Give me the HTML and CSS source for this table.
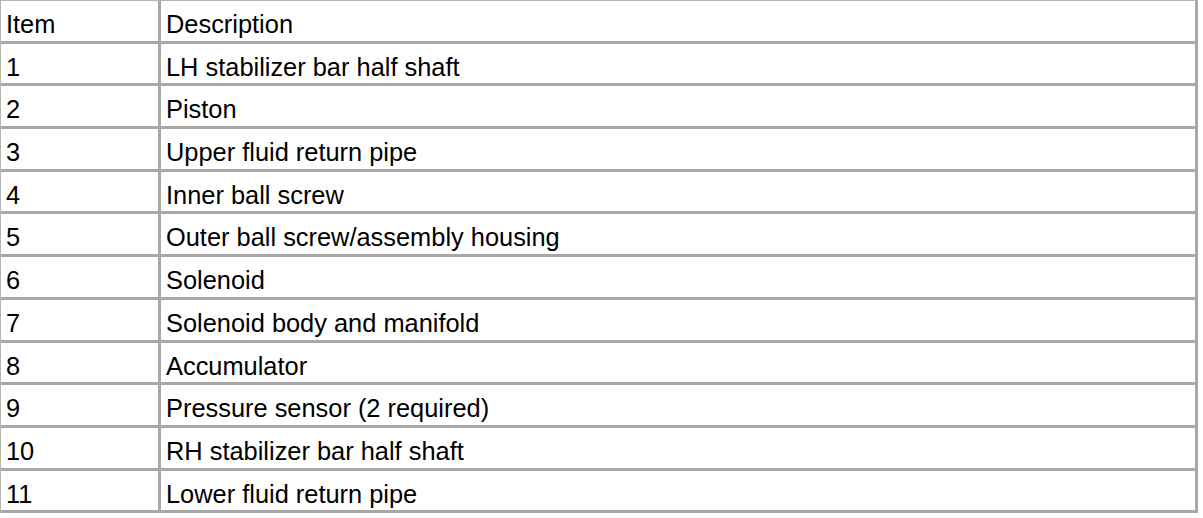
FILE: index.html
```html
<!DOCTYPE html>
<html>
<head>
<meta charset="utf-8">
<link rel="stylesheet" href="styles.css">
</head>
<body>
<table class="parts">
  <tr><td class="c-item">Item</td><td class="c-desc">Description</td></tr>
  <tr><td class="c-item">1</td><td class="c-desc">LH stabilizer bar half shaft</td></tr>
  <tr><td class="c-item">2</td><td class="c-desc">Piston</td></tr>
  <tr><td class="c-item">3</td><td class="c-desc">Upper fluid return pipe</td></tr>
  <tr><td class="c-item">4</td><td class="c-desc">Inner ball screw</td></tr>
  <tr><td class="c-item">5</td><td class="c-desc">Outer ball screw/assembly housing</td></tr>
  <tr><td class="c-item">6</td><td class="c-desc">Solenoid</td></tr>
  <tr><td class="c-item">7</td><td class="c-desc">Solenoid body and manifold</td></tr>
  <tr><td class="c-item">8</td><td class="c-desc">Accumulator</td></tr>
  <tr><td class="c-item">9</td><td class="c-desc">Pressure sensor (2 required)</td></tr>
  <tr><td class="c-item">10</td><td class="c-desc">RH stabilizer bar half shaft</td></tr>
  <tr><td class="c-item">11</td><td class="c-desc">Lower fluid return pipe</td></tr>
</table>
</body>
</html>
```
FILE: styles.css
```css
html, body {
  margin: 0;
  padding: 0;
  background: #ffffff;
}
.parts {
  border-collapse: separate;
  border-spacing: 0;
  width: 1198px;
  border-top: 1px solid #b4b4b4;
  border-left: 1px solid #b4b4b4;
  font-family: "Liberation Sans", Arial, sans-serif;
  font-size: 25.4px;
  color: #000;
}
.parts td {
  line-height: 28px;
  padding: 9px 0 2.7px 5px;
  border-right: 3px solid #a8a8a8;
  border-bottom: 3px solid #a8a8a8;
  vertical-align: top;
  white-space: nowrap;
}
.c-item {
  width: 152px;
}
```
